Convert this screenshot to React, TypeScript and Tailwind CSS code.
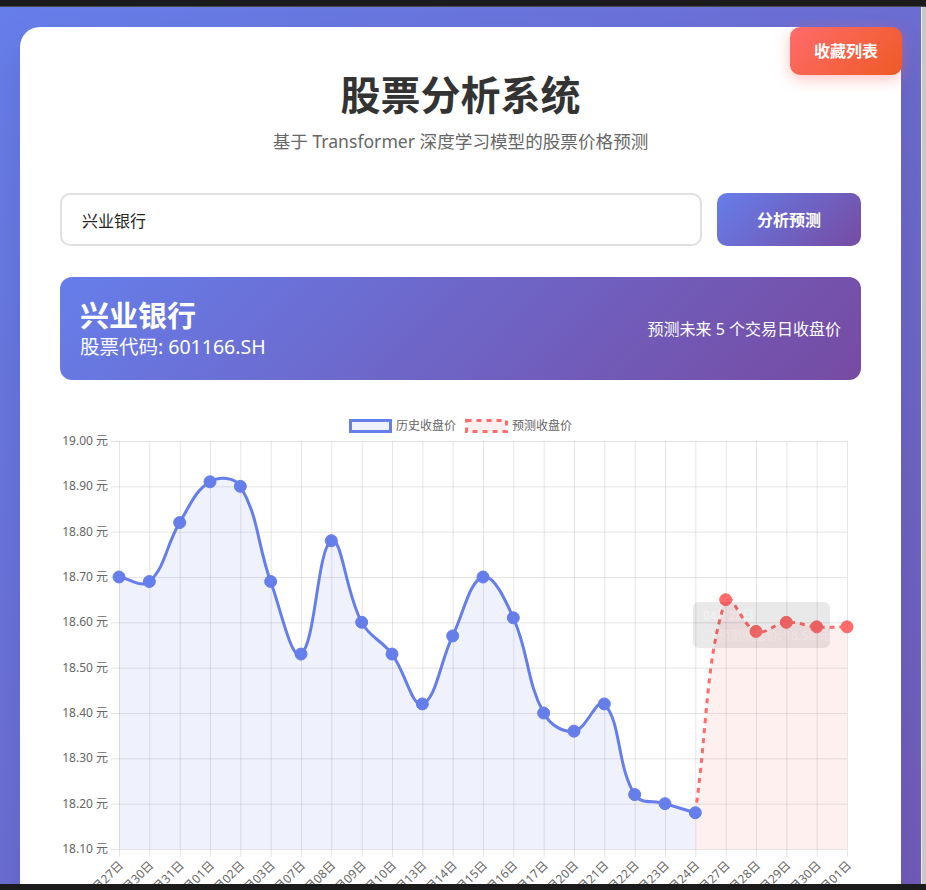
import React from 'react';

type Pt = { x: number; y: number };

const history = [18.7, 18.69, 18.82, 18.91, 18.9, 18.69, 18.53, 18.78, 18.6, 18.53, 18.42, 18.57, 18.7, 18.61, 18.4, 18.36, 18.42, 18.22, 18.2, 18.18];
const predicted = [18.65, 18.58, 18.6, 18.59, 18.59];
const labels = [
  '03月27日', '03月30日', '03月31日', '04月01日', '04月02日', '04月03日', '04月07日', '04月08日', '04月09日', '04月10日',
  '04月13日', '04月14日', '04月15日', '04月16日', '04月17日', '04月20日', '04月21日', '04月22日', '04月23日', '04月24日',
  '04月27日', '04月28日', '04月29日', '04月30日', '05月01日',
];

// chart area inside the svg
const L = 59;
const R = 787;
const T = 36;
const B = 444;
const step = (R - L) / (labels.length - 1);
const xAt = (i: number) => L + i * step;
const yAt = (v: number) => B - ((v - 18.1) / 0.9) * (B - T);
const yTicks = [19.0, 18.9, 18.8, 18.7, 18.6, 18.5, 18.4, 18.3, 18.2, 18.1];

const clamp = (v: number, a: number, b: number) => Math.max(a, Math.min(b, v));

// same curve as chart.js with tension 0.4
function curve(pts: Pt[], tension = 0.4) {
  const ctrl = pts.map((cur, i) => {
    const prev = pts[i - 1] || cur;
    const next = pts[i + 1] || cur;
    const d01 = Math.hypot(cur.x - prev.x, cur.y - prev.y);
    const d12 = Math.hypot(next.x - cur.x, next.y - cur.y);
    let s01 = d01 / (d01 + d12);
    let s12 = d12 / (d01 + d12);
    if (isNaN(s01)) s01 = 0;
    if (isNaN(s12)) s12 = 0;
    const fa = tension * s01;
    const fb = tension * s12;
    return {
      px: clamp(cur.x - fa * (next.x - prev.x), L, R),
      py: clamp(cur.y - fa * (next.y - prev.y), T, B),
      nx: clamp(cur.x + fb * (next.x - prev.x), L, R),
      ny: clamp(cur.y + fb * (next.y - prev.y), T, B),
    };
  });
  let d = `M${pts[0].x},${pts[0].y}`;
  for (let i = 1; i < pts.length; i++) {
    d += ` C${ctrl[i - 1].nx},${ctrl[i - 1].ny} ${ctrl[i].px},${ctrl[i].py} ${pts[i].x},${pts[i].y}`;
  }
  return d;
}

const histPts = history.map((v, i) => ({ x: xAt(i), y: yAt(v) }));
const predPts = [history[history.length - 1], ...predicted].map((v, i) => ({ x: xAt(i + history.length - 1), y: yAt(v) }));
const histLine = curve(histPts);
const predLine = curve(predPts);
const histFill = `${histLine} L${histPts[histPts.length - 1].x},${B} L${histPts[0].x},${B} Z`;
const predFill = `${predLine} L${predPts[predPts.length - 1].x},${B} L${predPts[0].x},${B} Z`;

const font = '"Noto Sans", "Noto Sans CJK SC", sans-serif';

function PriceChart() {
  return (
    <svg width="801" height="520" className="block" style={{ fontFamily: font }}>
      {/* legend */}
      <rect x="290.5" y="15.5" width="40" height="11" fill="rgba(102,126,234,0.1)" stroke="#667eea" strokeWidth="3" />
      <text x="336" y="25" fontSize="12" fill="#666">历史收盘价</text>
      <rect x="406.5" y="15.5" width="40" height="11" fill="rgba(255,107,107,0.1)" stroke="#ff6b6b" strokeWidth="3" strokeDasharray="5 5" />
      <text x="452" y="25" fontSize="12" fill="#666">预测收盘价</text>

      {/* grid */}
      {labels.map((_, i) => (
        <line key={'v' + i} x1={xAt(i) + 0.5} x2={xAt(i) + 0.5} y1={T} y2={B + 8} stroke="rgba(0,0,0,0.1)" />
      ))}
      {yTicks.map((v) => (
        <g key={v}>
          <line x1={L - 8} x2={R} y1={yAt(v) + 0.5} y2={yAt(v) + 0.5} stroke="rgba(0,0,0,0.1)" />
          <text x={L - 11} y={yAt(v) + 4} fontSize="12" fill="#666" textAnchor="end">
            {v.toFixed(2)} 元
          </text>
        </g>
      ))}
      {labels.map((l, i) => (
        <text
          key={l}
          x={xAt(i) + 5}
          y={B + 17}
          fontSize="12"
          fill="#666"
          textAnchor="end"
          transform={`rotate(-45 ${xAt(i) + 5} ${B + 17})`}
        >
          {l}
        </text>
      ))}

      {/* data */}
      <path d={histFill} fill="rgba(102,126,234,0.1)" />
      <path d={predFill} fill="rgba(255,107,107,0.1)" />
      <path d={predLine} fill="none" stroke="#ff6b6b" strokeWidth="3" strokeDasharray="5 5" />
      {predPts.slice(1).map((p, i) => (
        <circle key={'p' + i} cx={p.x} cy={p.y} r="6" fill="#ff6b6b" stroke="#ff6b6b" />
      ))}
      <path d={histLine} fill="none" stroke="#667eea" strokeWidth="3" />
      {histPts.map((p, i) => (
        <circle key={'h' + i} cx={p.x} cy={p.y} r="6" fill="#667eea" stroke="#667eea" />
      ))}

      {/* fading tooltip */}
      <g opacity="0.1">
        <rect x="633" y="197" width="137" height="46" rx="6" fill="rgba(0,0,0,0.8)" />
        <g opacity="0.35">
          <text x="643" y="215" fontSize="12" fontWeight="bold" fill="#fff">04月28日</text>
          <rect x="643" y="226" width="10" height="10" fill="rgba(255,107,107,0.1)" stroke="#ff6b6b" />
          <text x="658" y="235" fontSize="12" fill="#fff">预测收盘价: 18.58 元</text>
        </g>
      </g>
    </svg>
  );
}

export default function App() {
  return (
    <div className="relative flex h-[890px] w-[926px] flex-col overflow-hidden font-['Noto_Sans','Noto_Sans_CJK_SC',sans-serif]">
      <div className="h-[7px] shrink-0 border-b border-[#4a4a4a] bg-[#1b1b1b]" />
      <div className="flex min-h-0 flex-1">
        <main className="relative w-[921px] overflow-hidden bg-[linear-gradient(135deg,#667eea_0%,#764ba2_100%)] bg-[length:921px_1750px] p-5">
          <div className="rounded-[20px] bg-white px-10 pb-10 pt-10 shadow-[0_20px_40px_rgba(0,0,0,0.1)]">
            <header className="mb-10 text-center">
              <h1 className="text-[40px] font-bold leading-[56px] text-[#333]">股票分析系统</h1>
              <p className="mt-[6px] text-[17.6px] leading-6 text-[#666]">基于 Transformer 深度学习模型的股票价格预测</p>
            </header>

            <div className="flex gap-[15px]">
              <input
                readOnly
                value="兴业银行"
                className="h-[53px] flex-1 rounded-[10px] border-2 border-[#e0e0e0] px-5 text-[16px] text-[#222] outline-none"
              />
              <button className="h-[53px] w-[144px] rounded-[10px] bg-[linear-gradient(135deg,#667eea_0%,#764ba2_100%)] text-[16px] font-bold text-white">
                分析预测
              </button>
            </div>

            <div className="mt-[31px] flex h-[103px] items-center justify-between rounded-[12px] bg-[linear-gradient(135deg,#667eea_0%,#764ba2_100%)] px-5 text-white">
              <div>
                <h2 className="text-[29px] font-bold leading-[36px]">兴业银行</h2>
                <p className="text-[19.5px] leading-[26px]">股票代码: 601166.SH</p>
              </div>
              <p className="text-[16px]">预测未来 5 个交易日收盘价</p>
            </div>

            <div className="mt-[25px]">
              <PriceChart />
            </div>
          </div>

          <button className="absolute right-[19px] top-5 h-[48px] w-[112px] rounded-[10px] bg-[linear-gradient(135deg,#ff6b6b_0%,#ee5a24_100%)] text-[16px] font-bold text-white shadow-[0_4px_15px_rgba(255,107,107,0.4)]">
            收藏列表
          </button>
        </main>
        <div className="w-[5px] border-l border-[#f1f1f1] bg-[#c9c9c9]" />
      </div>
      <div className="absolute bottom-0 left-0 h-[6px] w-full bg-[#1b1b1b]" />
    </div>
  );
}
